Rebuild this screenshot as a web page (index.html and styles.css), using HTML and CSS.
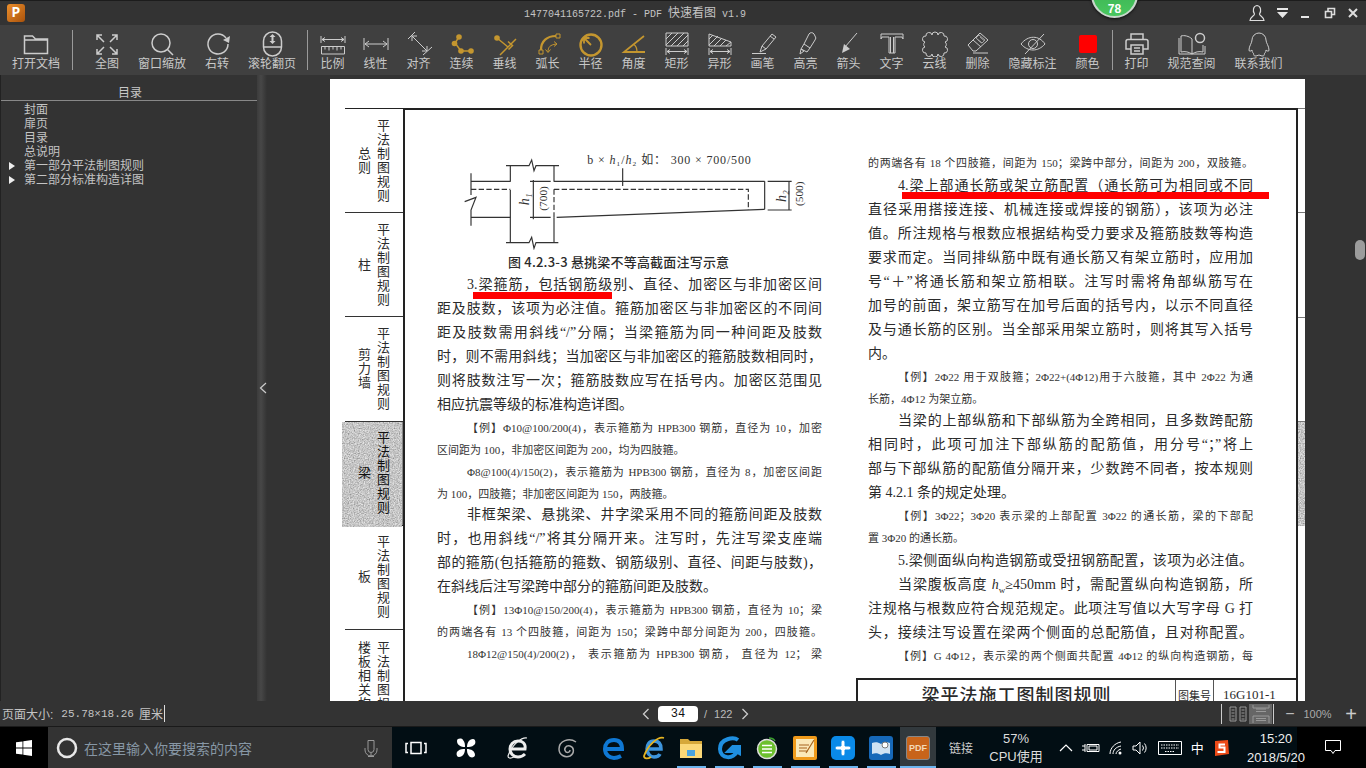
FILE: index.html
```html
<!DOCTYPE html>
<html lang="zh-CN">
<head>
    <meta charset="utf-8">
    <title>1477041165722.pdf - PDF 快速看图 v1.9</title>
    <link rel="stylesheet" href="styles.css">
</head>
<body>
<div class="app">
    <!-- title bar -->
    <div class="titlebar">
        <div class="app-logo">P</div>
        <div class="title"><span class="mono">1477041165722.pdf - PDF </span>快速看图<span class="mono"> v1.9</span></div>
        <div class="score">78</div>
        <div class="win-btns">
            <svg class="ic" width="16" height="18" viewBox="0 0 16 18"><path d="M5.500 10C3.500 7 4 2 8 1.500C12 2 12.500 7 10.500 10C10.500 12 15 13 15 16.500H1C1 13 5.500 12 5.500 10Z" stroke-width="1.200"/></svg>
            <svg class="solid" width="12" height="12" viewBox="0 0 12 12"><path d="M0 1h11v2H0zM0 5h11L5.500 11z"/></svg>
            <svg class="solid" width="12" height="12" viewBox="0 0 12 12"><path d="M1 9h8v2H1z"/></svg>
            <svg class="ic" width="12" height="12" viewBox="0 0 12 12"><path d="M1.500 4.500h6v6h-6zM4 4.500V1.500h6.500v6H7.500" stroke-width="1.600"/></svg>
            <svg class="ic" width="12" height="12" viewBox="0 0 12 12"><path d="M2 2l8 8M10 2l-8 8" stroke-width="2"/></svg>
        </div>
    </div>

    <!-- toolbar -->
    <div class="toolbar">
        <div class="tool open"><svg class="ic" viewBox="0 0 32 26"><path d="M4.500 22.500V5h8l3 3h12v14.500zM4.500 9h23"/></svg><span>打开文档</span></div>
        <div class="sep"></div>
        <div class="tool first"><svg class="ic" viewBox="0 0 32 26"><path d="M13 11L6 4M6 9V4h5M19 11l7-7M21 4h5v5M13 16l-7 7M6 18v5h5M19 16l7 7M26 18v5h-5"/></svg><span>全图</span></div>
        <div class="tool wide"><svg class="ic" viewBox="0 0 32 26"><circle cx="15" cy="12" r="9"/><path d="M21.500 18.500L27 24"/></svg><span>窗口缩放</span></div>
        <div class="tool"><svg class="ic" viewBox="0 0 32 26"><path d="M25 7A10 10 0 1 0 27 13"/><path class="fill" d="M29 5l-1 7-6-3z"/></svg><span>右转</span></div>
        <div class="tool wide"><svg class="ic" viewBox="0 0 32 26"><path d="M7.500 10a9 9 0 0 1 18 0v6a9 9 0 0 1-18 0zM7.500 16h18"/><path class="fill" d="M16.500 3l3 3h-2v4h2l-3 3-3-3h2V6h-2z"/></svg><span>滚轮翻页</span></div>
        <div class="sep near"></div>
        <div class="tool"><svg class="ic thin" viewBox="0 0 32 26"><path d="M4 5v7M28 5v7M5 8.500h22M8 6.500l-3 2 3 2M24 6.500l3 2-3 2M4.500 15.500h23v7.500h-23zM8 15.500v3M12 15.500v4M16 15.500v3M20 15.500v4M24 15.500v3"/></svg><span>比例</span></div>
        <div class="tool"><svg class="ic thin" viewBox="0 0 32 26"><path d="M4 7v12M28 7v12M5 13h22M9 10l-4 3 4 3M23 10l4 3-4 3"/></svg><span>线性</span></div>
        <div class="tool"><svg class="ic thin" viewBox="0 0 32 26"><path d="M5 8L12 1M20 24L29 16M9 5l15 15M9 10V5h5M24 15v5h-5"/></svg><span>对齐</span></div>
        <div class="tool gold"><svg class="ic" viewBox="0 0 32 26"><path d="M13 6L9 12l6 8h10"/><circle class="fill" cx="13" cy="6" r="2.800"/><circle class="fill" cx="8.500" cy="12.500" r="2.800"/><circle class="fill" cx="15" cy="20" r="2.800"/><circle class="fill" cx="25" cy="20" r="2.800"/></svg><span>连续</span></div>
        <div class="tool gold"><svg class="ic" viewBox="0 0 32 26"><path d="M8 7l11 9M27 8L11 24M19 10.500l4.500 4-4 4"/><circle class="fill" cx="8" cy="7" r="2.800"/></svg><span>垂线</span></div>
        <div class="tool gold"><svg class="ic" viewBox="0 0 32 26"><path d="M9 19C9 10 15 5 24 5" stroke-width="2.200"/><path class="hair" d="M7 19h4v4H7zM24 3h4v4h-4z"/><path class="hair" d="M16 21c0-5 2-7 8-8M22 10.500l3 2.500-3 2.500M13.500 18.500l2.500 3 2.500-3"/></svg><span>弧长</span></div>
        <div class="tool gold"><svg class="ic" viewBox="0 0 32 26"><circle cx="16" cy="14" r="10.500" stroke-width="2.400"/><path d="M16 14L9 7M9 12.500V7h5.500" stroke-width="1.800"/></svg><span>半径</span></div>
        <div class="tool gold"><svg class="ic" viewBox="0 0 32 26"><path d="M27 21H6L26 5" stroke-width="1.800"/><path d="M16 13.500c2 1.500 3 4 3 7.500" stroke-width="1.300"/></svg><span>角度</span></div>
        <div class="tool"><svg class="ic thin" viewBox="0 0 32 26"><path d="M5 2h22v13H5zM5 8l6-6M5 14L17 2M10 15L23 2M16 15L27 4M22 15l5-5M5 17v7M27 17v7M6 20.500h20M9 18.500l-3 2 3 2M23 18.500l3 2-3 2"/></svg><span>矩形</span></div>
        <div class="tool"><svg class="ic thin" viewBox="0 0 32 26"><path d="M5 3l22 8v4H5zM5 8l4-4M5 14l9-9M10 15l8-8M16 15l6-6M22 15l5-4M5 17v7M27 17v7M6 20.500h20M9 18.500l-3 2 3 2M23 18.500l3 2-3 2"/></svg><span>异形</span></div>
        <div class="tool"><svg class="ic thin" viewBox="0 0 32 26"><path d="M5 22.500h14M13 21l2-6L25 3l4 3-10 12zM15 15l4 3M23 5l4 3"/></svg><span>画笔</span></div>
        <div class="tool"><svg class="ic thin" viewBox="0 0 32 26"><path d="M10 23l1-5 3 2zM11 18l3-5 6 4-3 4zM14 13L19 3a3 3 0 0 1 5 0l1 2a3 3 0 0 1 0 4l-5 8"/></svg><span>高亮</span></div>
        <div class="tool"><svg class="ic thin" viewBox="0 0 32 26"><path d="M24 2L12 16"/><path class="fill" d="M9 22l2-9 6 5z"/></svg><span>箭头</span></div>
        <div class="tool"><svg class="ic thin" viewBox="0 0 32 26"><path d="M5 3h22v5l-1-2H19v16h-6V6H6L5 8zM14.500 6v16M17.500 6v16"/></svg><span>文字</span></div>
        <div class="tool"><svg class="ic thin" viewBox="0 0 32 26"><path d="M7 5a3 3 0 0 1 6-1 3 3 0 0 1 6 0 3 3 0 0 1 6 1 3 3 0 0 1 1 6 3 3 0 0 1 0 5 3 3 0 0 1-1 6 3 3 0 0 1-6 1 3 3 0 0 1-6 0 3 3 0 0 1-6-1 3 3 0 0 1-1-6 3 3 0 0 1 0-5 3 3 0 0 1 1-6z"/></svg><span>云线</span></div>
        <div class="tool"><svg class="ic thin" viewBox="0 0 32 26"><path d="M6 14L18 2l8 7-12 11h-3zM11 9l8 7M26 22H11"/><path d="M14 7l3-3 6 5-3 3zM15.500 8.500l4 3.500M18 6l4 3.500" stroke-width=".7"/></svg><span>删除</span></div>
        <div class="tool wide"><svg class="ic thin" viewBox="0 0 32 26"><path d="M4 13c7-9 18-9 24 0-7 8-17 8-24 0zM27 3L8 23"/><circle cx="16" cy="13" r="4.500"/></svg><span>隐藏标注</span></div>
        <div class="tool"><div class="swatch"></div><span>颜色</span></div>
        <div class="sep mid"></div>
        <div class="tool"><svg class="ic" viewBox="0 0 32 26"><path d="M10 9V3h12v6M10 18H5V10.500a2 2 0 0 1 2-2h18a2 2 0 0 1 2 2V18h-5M10 14h12v9H10zM13 17h6M13 20h6"/></svg><span>打印</span></div>
        <div class="tool wide"><svg class="ic thin" viewBox="0 0 32 26"><path d="M16 8C13 5 8 4 5 5v16c4-1 8 0 11 2 3-2 7-3 11-2V14M16 8v15M3 7v16h26v-8"/><circle cx="24" cy="7" r="4.500" stroke-width="1.500"/></svg><span>规范查阅</span></div>
        <div class="tool wide"><svg class="ic thin" viewBox="0 0 32 26"><path d="M9 9a7 7 0 0 1 14 0c0 3 3 6 3 10 0 2-2 1-3 0 0 2-1 3-2 4 1 1 0 2-2 2l-3-1-3 1c-2 0-3-1-2-2-1-1-2-2-2-4-1 1-3 2-3 0 0-4 3-7 3-10z"/></svg><span>联系我们</span></div>
    </div>

    <div class="workspace">
        <!-- bookmarks -->
        <div class="sidebar">
            <div class="side-head">目录</div>
            <ul class="tree">
                <li>封面</li>
                <li>扉页</li>
                <li>目录</li>
                <li>总说明</li>
                <li class="has-kids">第一部分平法制图规则</li>
                <li class="has-kids">第二部分标准构造详图</li>
            </ul>
        </div>
        <div class="splitter"><svg class="ic" width="8" height="12" viewBox="0 0 8 12"><path d="M7 1L1.500 6 7 11" stroke-width="1.200"/></svg></div>

        <div class="viewer">
            <div class="page">
                <svg class="hidden-defs" width="0" height="0"><filter id="noise" x="0" y="0" width="100%" height="100%"><feTurbulence type="fractalNoise" baseFrequency="0.8" numOctaves="2" seed="4"/><feColorMatrix values="0.800 0 0 0 0.160 0.800 0 0 0 0.160 0.800 0 0 0 0.160 0 0 0 0 1"/></filter></svg>

                <div class="tabs">
                    <div class="tab"><div class="tab-name">总则</div><div class="tab-title">平法制图规则</div></div>
                    <div class="tab"><div class="tab-name">柱</div><div class="tab-title">平法制图规则</div></div>
                    <div class="tab"><div class="tab-name">剪力墙</div><div class="tab-title">平法制图规则</div></div>
                    <div class="tab active"><svg class="noise" width="60" height="105"><rect width="60" height="105" filter="url(#noise)"/></svg><div class="tab-name">梁</div><div class="tab-title">平法制图规则</div></div>
                    <div class="tab"><div class="tab-name">板</div><div class="tab-title">平法制图规则</div></div>
                    <div class="tab open-end"><div class="tab-name">楼板相关构造</div><div class="tab-title">平法制图规则</div></div>
                </div>

                <div class="sheet">
                    <div class="col">
                        <svg class="figure" width="385" height="98" viewBox="321 216 1155 294">
                            <g class="fig-line">
                                <path d="M528 257H597L605 240L612 272L618 257H687M541 257V305M672 257V305M541 330V488M672 412V488"/>
                                <path d="M423 280V345M404 365L438 352L423 390V437M423 304H541M672 304H1304M423 412H541M1304 304V388M680 412L1304 388"/>
                                <path d="M528 488H597L605 472L612 505L618 488H685"/>
                                <path d="M610 300V418M600 304H662M600 412H662M1377 304V390M1313 304H1385M1313 390H1385M878 265V318"/>
                                <path class="dash" d="M423 328H541M672 328H1255V390M672 328V412"/>
                            </g>
                            <text class="fig-text spaced" x="772" y="252">b × <tspan class="it">h</tspan>₁/<tspan class="it">h</tspan>₂ 如： 300 × 700/500</text>
                            <text class="fig-text it big" transform="translate(598 376) rotate(-90)">h₁</text>
                            <text class="fig-text" transform="translate(650 392) rotate(-90)">(700)</text>
                            <text class="fig-text it big" transform="translate(1368 366) rotate(-90)">h₂</text>
                            <text class="fig-text" transform="translate(1418 378) rotate(-90)">(500)</text>
                        </svg>
                        <div class="caption">图 4.2.3-3 悬挑梁不等高截面注写示意</div>
                        <div class="ln in">3.梁箍筋，包括钢筋级别、直径、加密区与非加密区间</div>
                        <div class="ln">距及肢数，该项为必注值。箍筋加密区与非加密区的不同间</div>
                        <div class="ln">距及肢数需用斜线“/”分隔；当梁箍筋为同一种间距及肢数</div>
                        <div class="ln">时，则不需用斜线；当加密区与非加密区的箍筋肢数相同时，</div>
                        <div class="ln">则将肢数注写一次；箍筋肢数应写在括号内。加密区范围见</div>
                        <div class="ln end">相应抗震等级的标准构造详图。</div>
                        <div class="ex-group tight">
                            <div class="ex in">【例】Φ10@100/200(4)，表示箍筋为 HPB300 钢筋，直径为 10，加密</div>
                            <div class="ex end">区间距为 100，非加密区间距为 200，均为四肢箍。</div>
                            <div class="ex in">Φ8@100(4)/150(2)，表示箍筋为 HPB300 钢筋，直径为 8，加密区间距</div>
                            <div class="ex end">为 100，四肢箍；非加密区间距为 150，两肢箍。</div>
                        </div>
                        <div class="ln in">非框架梁、悬挑梁、井字梁采用不同的箍筋间距及肢数</div>
                        <div class="ln">时，也用斜线“/”将其分隔开来。注写时，先注写梁支座端</div>
                        <div class="ln">部的箍筋(包括箍筋的箍数、钢筋级别、直径、间距与肢数)，</div>
                        <div class="ln end">在斜线后注写梁跨中部分的箍筋间距及肢数。</div>
                        <div class="ex-group">
                            <div class="ex in">【例】13Φ10@150/200(4)，表示箍筋为 HPB300 钢筋，直径为 10；梁</div>
                            <div class="ex">的两端各有 13 个四肢箍，间距为 150；梁跨中部分间距为 200，四肢箍。</div>
                            <div class="ex in">18Φ12@150(4)/200(2)， 表示箍筋为 HPB300 钢筋， 直径为 12； 梁</div>
                        </div>
                    </div>

                    <div class="col right">
                        <div class="ex">的两端各有 18 个四肢箍，间距为 150；梁跨中部分，间距为 200，双肢箍。</div>
                        <div class="ln in">4.梁上部通长筋或架立筋配置（通长筋可为相同或不同</div>
                        <div class="ln">直径采用搭接连接、机械连接或焊接的钢筋），该项为必注</div>
                        <div class="ln">值。所注规格与根数应根据结构受力要求及箍筋肢数等构造</div>
                        <div class="ln">要求而定。当同排纵筋中既有通长筋又有架立筋时，应用加</div>
                        <div class="ln">号“＋”将通长筋和架立筋相联。注写时需将角部纵筋写在</div>
                        <div class="ln">加号的前面，架立筋写在加号后面的括号内，以示不同直径</div>
                        <div class="ln">及与通长筋的区别。当全部采用架立筋时，则将其写入括号</div>
                        <div class="ln end">内。</div>
                        <div class="ex-group snug">
                            <div class="ex in">【例】2Φ22 用于双肢箍；2Φ22+(4Φ12)用于六肢箍，其中 2Φ22 为通</div>
                            <div class="ex end">长筋，4Φ12 为架立筋。</div>
                        </div>
                        <div class="ln in">当梁的上部纵筋和下部纵筋为全跨相同，且多数跨配筋</div>
                        <div class="ln">相同时，此项可加注下部纵筋的配筋值，用分号“；”将上</div>
                        <div class="ln">部与下部纵筋的配筋值分隔开来，少数跨不同者，按本规则</div>
                        <div class="ln end">第 4.2.1 条的规定处理。</div>
                        <div class="ex-group">
                            <div class="ex in">【例】3Φ22；3Φ20 表示梁的上部配置 3Φ22 的通长筋，梁的下部配</div>
                            <div class="ex end">置 3Φ20 的通长筋。</div>
                        </div>
                        <div class="ln in">5.梁侧面纵向构造钢筋或受扭钢筋配置，该项为必注值。</div>
                        <div class="ln in">当梁腹板高度 <i>h</i><sub>w</sub>≥450mm 时，需配置纵向构造钢筋，所</div>
                        <div class="ln">注规格与根数应符合规范规定。此项注写值以大写字母 G 打</div>
                        <div class="ln">头，接续注写设置在梁两个侧面的总配筋值，且对称配置。</div>
                        <div class="ex in">【例】G 4Φ12，表示梁的两个侧面共配置 4Φ12 的纵向构造钢筋，每</div>
                        <div class="title-block">
                            <div class="tb-name">梁平法施工图制图规则</div>
                            <div class="tb-label">图集号</div>
                            <div class="tb-code">16G101-1</div>
                        </div>
                    </div>

                    <div class="mark mark-left"></div>
                    <div class="mark mark-right"></div>
                </div>

                <div class="edge">
                    <div></div><div></div><div></div>
                    <div class="edge-active"><svg width="7" height="105"><rect width="7" height="105" filter="url(#noise)"/></svg></div>
                </div>
            </div>
            <div class="scroll-thumb"></div>
        </div>
    </div>

    <!-- status bar -->
    <div class="statusbar">
        <div class="page-size">页面大小:<span class="mono">25.78×18.26</span>厘米<span class="caret"></span></div>
        <div class="pager">
            <svg class="ic" width="8" height="12" viewBox="0 0 8 12"><path d="M6.500 1L1.500 6l5 5" stroke-width="1.300"/></svg>
            <div class="page-input">34</div>
            <span class="page-total">/ 122</span>
            <svg class="ic" width="8" height="12" viewBox="0 0 8 12"><path d="M1.500 1l5 5-5 5" stroke-width="1.300"/></svg>
        </div>
        <div class="view-tools">
            <div class="view-group">
                <svg class="ic thin dim" width="18" height="18" viewBox="0 0 18 18"><path d="M1 2h6v14H1zM11 2h6v14h-6zM2.500 5h3M2.500 8h3M2.500 11h3M2.500 14h3M12.500 5h3M12.500 8h3M12.500 11h3M12.500 14h3"/></svg>
                <div class="view-active"><svg class="ic thin dim" width="18" height="18" viewBox="0 0 18 18"><path d="M1 0v3h16V0M4 4h10M4 6.500h10M1 18v-7h16v7M4 13.500h10M4 15.500h10"/></svg></div>
            </div>
            <span class="zoom-btn">−</span>
            <span class="zoom-val">100%</span>
            <span class="zoom-btn plus">+</span>
        </div>
    </div>

    <!-- windows taskbar -->
    <div class="taskbar">
        <div class="start"><svg width="16" height="16" viewBox="0 0 16 16"><path class="white" d="M0 2.300l6.500-.9v6.200H0zM7.300 1.300L16 0v7.600H7.300zM0 8.400h6.500v6.200L0 13.700zM7.300 8.400H16V16l-8.700-1.200z"/></svg></div>
        <div class="search">
            <svg class="ring" width="22" height="22" viewBox="0 0 22 22"><circle cx="11" cy="11" r="9"/></svg>
            <span class="search-text">在这里输入你要搜索的内容</span>
            <svg class="ic thin mic" width="14" height="18" viewBox="0 0 14 18"><path d="M4 1.500h6v9a3 3 0 0 1-6 0zM1 9v2a6 6 0 0 0 12 0V9M7 14v3M4 17.500h6"/></svg>
        </div>
        <div class="task-view"><svg class="ic white-line" width="22" height="14" viewBox="0 0 22 14"><path d="M6 1.500h10v11H6zM3 2.500H1v9h2M19 2.500h2v9h-2"/></svg></div>
        <div class="task-icons">
            <div class="task-icon w52"><svg width="24" height="24" viewBox="0 0 24 24"><path class="white" d="M11 11C7 11 3 9 3 5c0-3 5-3 6-1 2 2 2 5 2 7zM13 11c0-4 2-8 6-8 3 0 3 5 1 6-2 2-5 2-7 2zM13 13c4 0 8 2 8 6 0 3-5 3-6 1-2-2-2-5-2-7zM11 13c0 4-2 8-6 8-3 0-3-5-1-6 2-2 5-2 7-2z"/></svg></div>
            <div class="task-icon w52"><svg width="24" height="24" viewBox="0 0 24 24"><path class="e-white" d="M4 13h15c1-6-3-8-7-8-5 0-8 4-8 8s3 8 8 8c3 0 5-1 7-3"/><path class="e-white thin-e" d="M21 2C16 1 6 8 2 20c0 2 2 3 6 1"/></svg></div>
            <div class="task-icon w48"><svg width="24" height="24" viewBox="0 0 24 24"><path class="spiral" d="M20 6C13 1 3 5 3 13c0 6 6 9 11 7 5-3 4-9 0-10-4-1-7 3-4 6 2 1 4 0 4-2"/></svg></div>
            <div class="task-icon w44"><svg width="24" height="24" viewBox="0 0 24 24"><path class="edge-e" d="M5 13h15c0-6-3-9-8-9-6 0-9 4-9 9 0 6 5 9 9 9 3 0 5-1 7-2"/></svg></div>
            <div class="task-icon w36"><svg width="26" height="26" viewBox="0 0 26 26"><path class="ie-e" d="M7 14h13c0-5-2-8-7-8s-7 4-7 8 3 8 7 8c3 0 5-1 6-3"/><path class="ie-ring" d="M23 3C17 1 7 10 3 21c0 3 4 3 7 1"/></svg></div>
            <div class="task-icon running"><svg width="22" height="20" viewBox="0 0 22 20"><path class="folder-back" d="M0 1h8l2 2h12v17H0z"/><path class="folder-front" d="M0 6h22v14H0z"/><path class="folder-tab" d="M7 12h8v6H7z"/></svg></div>
            <div class="task-icon running"><svg width="24" height="24" viewBox="0 0 24 24"><path class="g-blue" d="M21 4C17 1 3 2 3 13c0 10 14 11 17 2h-8l4-4h8c1 0 0 5-2 8"/></svg></div>
            <div class="task-icon running"><svg width="24" height="24" viewBox="0 0 24 24"><circle class="g-disc" cx="12" cy="13" r="9.500"/><path class="g-e" d="M7 13h10M7 9.500h10M7 16.500h10"/><path class="g-arc" d="M14 2c3 0 5 1 6 3"/></svg></div>
            <div class="task-icon running"><svg width="24" height="24" viewBox="0 0 24 24"><rect class="note-bg" width="24" height="24" rx="2"/><rect class="note-paper" x="3" y="3" width="18" height="18"/><path class="note-lines" d="M6 9h10M6 12h8M6 15h9M21 4L13 17"/></svg></div>
            <div class="task-icon running"><svg width="24" height="24" viewBox="0 0 24 24"><rect class="cross-bg" width="24" height="24" rx="5"/><path class="cross-mark" d="M10 6a2 2 0 0 1 4 0v4h4a2 2 0 0 1 0 4h-4v4a2 2 0 0 1-4 0v-4H6a2 2 0 0 1 0-4h4z"/></svg></div>
            <div class="task-icon running"><svg width="24" height="24" viewBox="0 0 24 24"><rect class="book-bg" width="24" height="24" rx="3"/><path class="book-page" d="M3 7c3-1 6-1 9 1 3-2 6-2 9-1v11c-3-1-6-1-9 1-3-2-6-2-9-1z"/><circle class="book-lens" cx="16" cy="9" r="3"/></svg></div>
            <div class="task-icon current running"><div class="pdf-tile">PDF</div></div>
        </div>
        <div class="task-text">链接</div>
        <div class="cpu"><div>57%</div><div>CPU使用</div></div>
        <div class="tray">
            <svg class="ic white-line" width="14" height="8" viewBox="0 0 14 8"><path d="M1 7l6-6 6 6" stroke-width="1.200"/></svg>
            <svg class="ic white-line" width="18" height="12" viewBox="0 0 18 12"><path d="M5 2.500h12v7H5zM7 4h8v4H7z" stroke-width="1"/><path d="M0 4h3M0 8h3M3 2v8" stroke-width="1"/></svg>
            <svg class="ic white-line" width="14" height="14" viewBox="0 0 14 14"><path d="M1 13C1 7 6 2 12 1M4 13c0-4 3-7 8-8M7 13c0-2 2-4 5-5" stroke-width="1"/><circle class="white" cx="11" cy="12" r="1.500"/></svg>
            <svg class="ic white-line" width="16" height="14" viewBox="0 0 16 14"><path d="M1 5h3l4-4v12L4 9H1zM10.500 4.500a4 4 0 0 1 0 5M12.500 2.500a7 7 0 0 1 0 9" stroke-width="1"/></svg>
            <svg class="ic white-line" width="24" height="14" viewBox="0 0 24 14"><path d="M3 4h18M3 7h18M7 10.500h10" stroke-width="1" stroke-dasharray="1.500 1"/><path d="M.5.500h23v13H.500z" stroke-width="1"/></svg>
            <span class="ime">中</span>
            <svg width="16" height="16" viewBox="0 0 16 16"><path class="sogou-bg" d="M2 1l13-1 1 14-14 2z"/><path class="sogou-s" d="M12 4.500H6.500v3h5v4.500H4.500"/></svg>
        </div>
        <div class="clock"><div>15:20</div><div>2018/5/20</div></div>
        <div class="notify"><svg class="ic white-line" width="16" height="15" viewBox="0 0 16 15"><path d="M.5.500h15v10H10l-2 3-2-3H.500z" stroke-width="1"/></svg></div>
    </div>
</div>
</body>
</html>
```

FILE: styles.css
```css
* { box-sizing: border-box; }
html, body { margin: 0; padding: 0; height: 100%; overflow: hidden; }
body { font-family: "Liberation Sans", "Noto Sans CJK SC", sans-serif; font-size: 12px; color: #ccc; background: #333; }
.app { width: 1366px; height: 768px; display: flex; flex-direction: column; }
.mono { font-family: "Liberation Mono", "Noto Sans CJK SC", monospace; }

/* icons */
.ic { fill: none; stroke: currentColor; stroke-width: 1.500; flex: none; }
.ic.thin { stroke-width: 1; }
.ic .fill { fill: currentColor; stroke: none; }
.ic .hair { stroke-width: 1; }
.solid { fill: #e6e6e6; }
.white { fill: #fff; stroke: none; }
.white-line { color: #fff; }
.dim { color: #999; }

/* title bar */
.titlebar { height: 25px; flex: none; background: #333; border-top: 1px solid #1c1c1c; display: flex; align-items: center; position: relative; }
.app-logo { width: 18px; height: 18px; margin-left: 7px; border-radius: 3px; background: linear-gradient(135deg, #ec8f2c, #a9520c); color: #fff; font: bold 14px/18px "Liberation Mono", monospace; text-align: center; }
.title { position: absolute; left: 524px; top: 4px; font-size: 12px; line-height: 16px; color: #c4c4c4; white-space: nowrap; }
.title .mono { font-size: 10px; }
.score { position: absolute; left: 1091px; top: -30px; width: 47px; height: 47px; border-radius: 50%; background: linear-gradient(#35a94c, #49c75f); border: 2px solid #c9d6cc; box-shadow: 0 1px 3px #111; color: #fff; font: bold 12px/14px "Liberation Sans", sans-serif; text-align: center; padding-top: 29px; z-index: 3; }
.win-btns { margin-left: auto; width: 117px; padding-right: 7px; display: flex; justify-content: space-between; align-items: center; color: #ddd; }

/* toolbar */
.toolbar { height: 50px; flex: none; background: #404040; display: flex; }
.tool { width: 43px; flex: none; display: flex; flex-direction: column; align-items: center; padding-top: 6px; }
.tool svg { width: 32px; height: 26px; }
.tool span { font-size: 12px; line-height: 14px; white-space: nowrap; color: #c8c8c8; }
.tool.open { width: 72px; }
.tool.first { margin-left: 12.500px; }
.tool.wide { width: 67px; }
.tool.gold svg { color: #c4962f; }
.swatch { width: 18px; height: 18px; margin: 4px 0; background: #f00; border-radius: 2px; }
.sep { width: 1px; height: 40px; margin-top: 5px; background: #9a9a9a; flex: none; }
.sep.near { margin-left: 1px; margin-right: 3.500px; }
.sep.mid { margin-left: 3px; margin-right: 2px; }

/* workspace */
.workspace { flex: 1; display: flex; background: #333; min-height: 0; }
.sidebar { width: 257px; flex: none; border-left: 1px solid #222; }
.side-head { height: 26px; line-height: 37px; text-align: center; font-size: 12px; border-bottom: 1px solid #888; padding-left: 2px; color: #c8c8c8; }
.tree { list-style: none; margin: 2px 0 0; padding: 0; }
.tree li { height: 14px; line-height: 14px; padding-left: 23px; position: relative; color: #c4c4c4; white-space: nowrap; }
.tree li.has-kids::before { content: ""; position: absolute; left: 8px; top: 3px; border-left: 6px solid #eee; border-top: 4px solid transparent; border-bottom: 4px solid transparent; }
.splitter { width: 10px; flex: none; background: linear-gradient(90deg, #3c3c3c, #474747 40%, #333); display: flex; align-items: center; justify-content: center; color: #ccc; padding-left: 2px; }
.viewer { flex: 1; position: relative; padding: 4px 0 0 63px; overflow: hidden; }
.scroll-thumb { position: absolute; right: 1px; top: 165px; width: 10px; height: 20px; border-radius: 5px; background: #9c9c9c; }

/* the scanned page */
.page { width: 975px; height: 622px; background: #fff; padding: 29px 0 0 15px; display: flex; overflow: hidden; color: #2b2b2b; font-family: "Liberation Serif", "Noto Sans CJK SC", serif; position: relative; }
.hidden-defs { position: absolute; }
.tabs { width: 58px; flex: none; border-top: 1px solid #222; font-family: "Noto Sans CJK SC", sans-serif; }
.tab { height: 104.200px; border-bottom: 1px solid #333; display: flex; justify-content: flex-end; align-items: center; gap: 5px; padding-right: 13px; position: relative; }
.tab-title, .tab-name { writing-mode: vertical-rl; text-orientation: upright; font-size: 13px; line-height: 14px; letter-spacing: 1px; position: relative; white-space: nowrap; }
.tab.open-end { align-items: flex-start; padding-top: 11px; border-bottom: 0; height: 120px; }
.tab.active { background: #888; border-bottom: 1px solid #222; color: #111; }
.noise { position: absolute; left: -3px; top: 0; }
.sheet { width: 895px; flex: none; height: 700px; border: 2px solid #222; border-bottom: 0; padding: 42px 0 0 32px; display: flex; gap: 46px; position: relative; }
.col { width: 385px; flex: none; }
.figure { display: block; }
.fig-line { fill: none; stroke: #333; stroke-width: 3.500; }
.fig-line .dash { stroke-dasharray: 16 7; }
.fig-text { font-family: "Liberation Serif", "Noto Sans CJK SC", serif; font-size: 34px; fill: #333; }
.fig-text.spaced { font-size: 36px; letter-spacing: 2.500px; }
.fig-text.big { font-size: 42px; }
.it { font-style: italic; }
.caption { height: 23px; line-height: 23px; padding-left: 71px; font-family: "Noto Sans CJK SC", sans-serif; font-size: 13px; font-weight: 500; letter-spacing: .2px; white-space: pre; }
.ln { height: 24px; line-height: 24px; font-size: 14px; text-align: justify; text-align-last: justify; }
.ex { height: 22px; line-height: 22px; font-size: 11px; text-align: justify; text-align-last: justify; color: #333; }
.ln.in, .ex.in { padding-left: 30px; }
.ln.end, .ex.end { text-align-last: left; }
.ln sub { font-size: 9px; line-height: 0; }
.ex-group.tight { margin-bottom: -2px; }
.ex-group.snug { margin-bottom: -1px; }
.title-block { margin: 11px 0 0 -12px; width: 440px; height: 60px; border: 2px solid #222; border-right: 0; display: grid; grid-template-columns: 317px 38px 1fr; }
.tb-name { font-family: "Noto Sans CJK SC", sans-serif; font-size: 18px; letter-spacing: 1px; line-height: 28px; text-align: center; font-weight: 500; }
.tb-label { border-left: 1px solid #555; font-size: 11px; line-height: 30px; text-align: center; font-family: "Noto Sans CJK SC", sans-serif; }
.tb-code { border-left: 1px solid #555; font-size: 13px; line-height: 30px; padding-left: 9px; }

/* red marks drawn on top of the scan */
.mark { position: absolute; height: 7px; background: #f00; }
.mark-left { left: 68px; top: 182px; width: 139px; }
.mark-right { left: 497px; top: 82px; width: 367px; }

/* right hand page edge */
.edge { width: 7px; flex: none; display: grid; grid-template-rows: repeat(3, 104.300px) 105px; align-content: start; }
.edge > div { border-top: 1px solid #777; }
.edge-active { overflow: hidden; }

/* status bar */
.statusbar { height: 26px; flex: none; background: #333; border-bottom: 1px solid #1a1a1a; display: flex; align-items: center; position: relative; }
.page-size { margin-left: 2px; display: flex; align-items: center; white-space: pre; color: #c4c4c4; font-size: 12px; }
.page-size .mono { font-size: 11px; margin: 0 5px 0 8px; }
.caret { width: 1px; height: 17px; background: #ddd; margin-left: 1px; }
.pager { position: absolute; left: 642px; top: 5px; display: flex; align-items: center; color: #ccc; gap: 5px; height: 16px; }
.page-input { width: 40px; height: 16px; margin: 0 1px 0 3px; background: #fff; border-radius: 4px; color: #111; text-align: center; font: 12px/16px "Liberation Mono", monospace; }
.page-total { font-size: 11px; width: 32px; color: #bbb; word-spacing: 4px; white-space: pre; }
.view-tools { position: absolute; left: 1221px; top: 2px; height: 22px; display: flex; align-items: center; }
.view-group { width: 53px; height: 20px; border-left: 1px solid #ccc; border-right: 1px solid #ccc; display: flex; align-items: center; justify-content: space-between; padding: 0 1px 0 7px; }
.view-active { width: 23px; height: 20px; background: #666; display: flex; align-items: center; justify-content: center; }
.zoom-btn { width: 32px; text-align: center; font: 16px/20px "Liberation Sans", sans-serif; color: #bbb; }
.zoom-val { width: 31px; text-align: center; font-size: 11px; color: #aaa; margin: 0 -4px; }
.zoom-btn.plus { margin-left: 6px; font-size: 20px; color: #ccc; }

/* windows taskbar */
.taskbar { height: 41px; flex: none; background: #020e14; display: flex; align-items: center; color: #ddd; }
.taskbar > * { flex: none; }
.start { width: 48px; height: 41px; background: #000; display: flex; align-items: center; justify-content: center; }
.search { width: 344px; height: 41px; background: #333; display: flex; align-items: center; padding-left: 8px; }
.ring { fill: none; stroke: #e8e8e8; stroke-width: 2.500; }
.search-text { margin-left: 6px; font-size: 14px; color: #8797a5; }
.mic { margin-left: auto; margin-right: 14px; color: #999; }
.task-view { width: 48px; height: 41px; display: flex; align-items: center; justify-content: center; }
.task-icons { display: flex; width: 496px; height: 41px; align-items: center; }
.task-icon { width: 38px; height: 41px; flex: none; display: flex; align-items: center; justify-content: center; position: relative; }
.task-icon.w52 { width: 52px; }
.task-icon.w48 { width: 48px; }
.task-icon.w44 { width: 44px; }
.task-icon.w36 { width: 36px; }
.task-icon.running::after { content: ""; position: absolute; left: 5px; right: 4px; bottom: 0; height: 2px; background: #6cb4ee; }
.task-icon.current { background: #32393d; width: 36px; }
.task-icon.current::after { left: 0; right: 0; }
.e-white { fill: none; stroke: #eee; stroke-width: 3; }
.e-white.thin-e { stroke-width: 1.200; }
.spiral { fill: none; stroke: #aaa; stroke-width: 1.500; }
.edge-e { fill: none; stroke: #0f78d4; stroke-width: 4; }
.ie-e { fill: none; stroke: #3d94dc; stroke-width: 3.500; }
.ie-ring { fill: none; stroke: #e6b422; stroke-width: 1.800; }
.folder-back { fill: #d6a83a; }
.folder-front { fill: #fbd878; }
.folder-tab { fill: #4aa3df; }
.g-blue { fill: none; stroke: #1f8fe0; stroke-width: 4; }
.g-disc { fill: #6cc02f; stroke: #ddd; stroke-width: 1.500; }
.g-e { stroke: #fff; stroke-width: 1.500; }
.g-arc { fill: none; stroke: #3a9c2e; stroke-width: 1.500; }
.note-bg { fill: #f09a1a; }
.note-paper { fill: #fbe9b8; }
.note-lines { fill: none; stroke: #a8641e; stroke-width: 1.200; }
.cross-bg { fill: #0a8ae8; }
.cross-mark { fill: #fff; stroke: #0a8ae8; stroke-width: 1; }
.book-bg { fill: #1668b8; }
.book-page { fill: #cfe2f3; }
.book-lens { fill: #fff; stroke: #777; }
.pdf-tile { width: 24px; height: 24px; border-radius: 3px; background: #c8641a; border: 1px solid #888; color: #f4d9b8; font: bold 9px/22px "Liberation Sans", sans-serif; text-align: center; }
.task-text { width: 37px; font-size: 12px; color: #ccc; margin-left: 13px; }
.cpu { width: 60px; text-align: center; font-size: 13px; line-height: 18px; color: #ddd; }
.tray { width: 170px; margin-left: 13px; display: flex; align-items: center; justify-content: space-between; color: #fff; }
.ime { font-size: 13px; font-family: "Noto Sans CJK SC", sans-serif; }
.sogou-bg { fill: #ec4a17; }
.sogou-s { fill: none; stroke: #fff; stroke-width: 2; }
.clock { width: 68px; margin-left: 13px; margin-right: -13px; padding-top: 1px; text-align: center; font-size: 13px; line-height: 19px; color: #eee; position: relative; z-index: 1; }
.notify { width: 69px; height: 41px; background: #000; display: flex; align-items: center; justify-content: center; padding-left: 2px; }
```
